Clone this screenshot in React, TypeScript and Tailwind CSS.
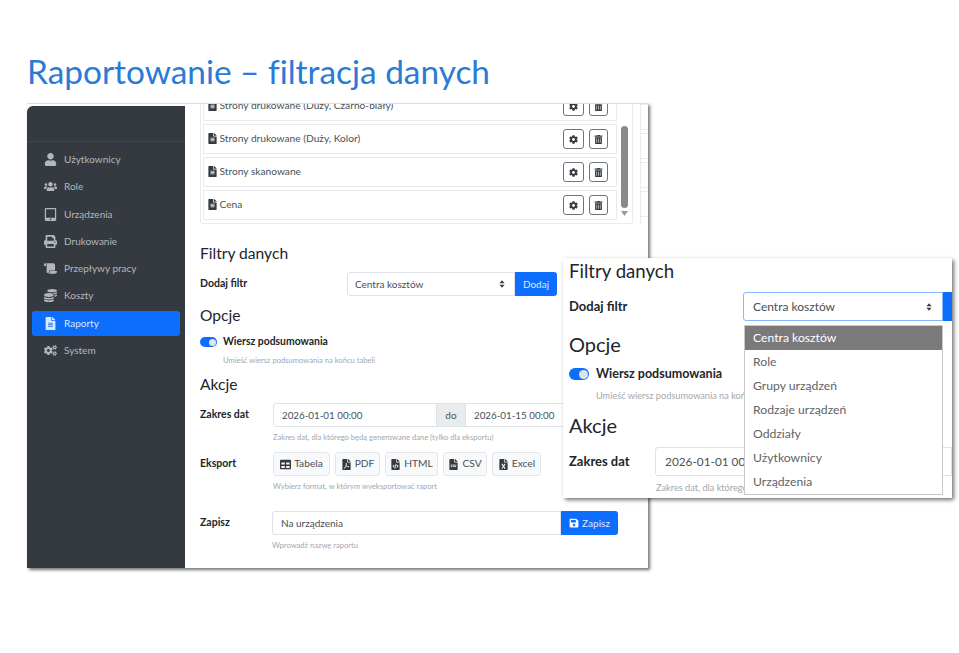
import type { ReactNode } from 'react';
import {
  FaUser, FaUsers, FaTabletAlt, FaPrint, FaScroll, FaCoins, FaFileAlt, FaCogs, FaCog, FaTrashAlt,
  FaTable, FaFilePdf, FaFileCode, FaFileCsv, FaFileExcel, FaSave,
} from 'react-icons/fa';

const NAV = [
  { label: 'Użytkownicy', icon: FaUser },
  { label: 'Role', icon: FaUsers },
  { label: 'Urządzenia', icon: FaTabletAlt },
  { label: 'Drukowanie', icon: FaPrint },
  { label: 'Przepływy pracy', icon: FaScroll },
  { label: 'Koszty', icon: FaCoins },
  { label: 'Raporty', icon: FaFileAlt, active: true },
  { label: 'System', icon: FaCogs },
];

const ROWS = ['Strony drukowane (Duży, Czarno-biały)', 'Strony drukowane (Duży, Kolor)', 'Strony skanowane', 'Cena'];

const EXPORTS = [
  { label: 'Tabela', icon: FaTable, w: 'w-[57px]' },
  { label: 'PDF', icon: FaFilePdf, w: 'w-[45px]' },
  { label: 'HTML', icon: FaFileCode, w: 'w-[53px]' },
  { label: 'CSV', icon: FaFileCsv, w: 'w-[44px]' },
  { label: 'Excel', icon: FaFileExcel, w: 'w-[49px]' },
];

const OPTIONS = ['Centra kosztów', 'Role', 'Grupy urządzeń', 'Rodzaje urządzeń', 'Oddziały', 'Użytkownicy', 'Urządzenia'];

function Chevrons() {
  return (
    <svg width="6" height="8" viewBox="0 0 7 9" className="shrink-0 fill-[#343a40]">
      <path d="M3.5 0 6.5 3.5H.5z" />
      <path d="M3.5 9 .5 5.5h6z" />
    </svg>
  );
}

function Toggle({ big }: { big?: boolean }) {
  return (
    <span className={`flex items-center justify-end rounded-full bg-[#0d6efd] p-[1.5px] ${big ? 'w-[20px] h-[12px]' : 'w-[17px] h-[10px]'}`}>
      <span className={`rounded-full bg-[#dfe3ea] ${big ? 'w-[9px] h-[9px]' : 'w-[7px] h-[7px]'}`} />
    </span>
  );
}

function Hint({ children, className = '' }: { children: ReactNode; className?: string }) {
  return <p className={`text-[7.6px] leading-[10px] text-[#a3a8ad] whitespace-nowrap ${className}`}>{children}</p>;
}

function Sidebar() {
  return (
    <aside className="mt-[2px] w-[158px] shrink-0 bg-[#343a40] rounded-tl-[6px]">
      <div className="h-[36px] border-b border-[#40464d]" />
      <nav className="px-[5px] pt-[5px] flex flex-col gap-[2.3px]">
        {NAV.map(({ label, icon: Icon, active }) => (
          <div
            key={label}
            className={`h-[25px] flex items-center rounded-[3px] text-[10px] ${active ? 'bg-[#0d6efd] text-[#dbe8fd]' : 'text-[#b4b7ba]'}`}
          >
            <span className="w-[27px] ml-[5px] flex justify-center text-[13px]">
              <Icon />
            </span>
            <span>{label}</span>
          </div>
        ))}
      </nav>
    </aside>
  );
}

function MetricList() {
  return (
    <div className="flex h-[120px] gap-[7px]">
      <div className="w-[433px] shrink-0 flex border border-t-0 border-[#e9ecef] rounded-b-[3px] overflow-hidden">
        <div className="w-[416px] flex flex-col justify-end gap-[3px] pl-[2px] pb-[3px]">
          {ROWS.map((row) => (
            <div key={row} className="h-[30px] shrink-0 flex items-center justify-between border border-[#e9ecef] pl-[3px] pr-[8px] text-[10.2px] text-[#495057]">
              <span className="flex items-center gap-[1.5px] whitespace-nowrap">
                <FaFileAlt className="text-[11px] text-[#343a40]" />
                {row}
              </span>
              <span className="flex gap-[5px]">
                <span className="w-[21px] h-[20px] flex items-center justify-center rounded-[3px] border border-[#6c757d] text-[9px] text-[#343a40]">
                  <FaCog />
                </span>
                <span className="w-[19px] h-[20px] flex items-center justify-center rounded-[3px] border border-[#6c757d] text-[9px] text-[#343a40]">
                  <FaTrashAlt />
                </span>
              </span>
            </div>
          ))}
        </div>
        <div className="flex-1 flex flex-col items-center pt-[22px]">
          <div className="w-[7px] h-[82px] rounded-full bg-[#8a8a8a]" />
          <svg width="7" height="5" viewBox="0 0 7 5" className="mt-[3px] fill-[#9a9a9a]">
            <path d="M0 0h7L3.500 5z" />
          </svg>
        </div>
      </div>
      <div className="flex-1 flex flex-col gap-[3px] border-l border-[#e9ecef]">
        {[0, 1, 2, 3].map((i) => (
          <div key={i} className="h-[26px] border-y border-[#e9ecef]" />
        ))}
      </div>
    </div>
  );
}

function MainWindow() {
  return (
    <div className="absolute left-[27px] top-[103px] w-[621px] h-[465px] flex bg-white overflow-hidden shadow-[2px_2px_3px_rgba(0,0,0,0.55)] border-t border-[#dfdfdf]">
      <Sidebar />
      <main className="flex-1 min-w-0 pl-[15px] text-[#212529]">
        <MetricList />
        <h2 className="mt-[19px] text-[15.6px] leading-[20px]">Filtry danych</h2>
        <div className="mt-[9px] flex items-center">
          <span className="w-[147px] text-[10.5px] font-bold">Dodaj filtr</span>
          <div className="w-[168px] h-[24px] flex items-center justify-between pl-[7px] pr-[9px] border border-[#dee2e6] rounded-l-[3px] text-[10px] text-[#495057]">
            Centra kosztów
            <Chevrons />
          </div>
          <span className="w-[42px] h-[24px] flex items-center justify-center bg-[#0d6efd] rounded-r-[3px] text-[10px] text-[#dbe8fd]">Dodaj</span>
        </div>
        <h2 className="mt-[9px] text-[15.6px] leading-[20px]">Opcje</h2>
        <div className="mt-[11px] flex items-center gap-[6px] h-[12px]">
          <Toggle />
          <span className="text-[10.4px] font-bold whitespace-nowrap">Wiersz podsumowania</span>
        </div>
        <Hint className="mt-[7px] ml-[23px]">Umieść wiersz podsumowania na końcu tabeli</Hint>
        <h2 className="mt-[9px] text-[15.6px] leading-[20px]">Akcje</h2>
        <div className="mt-[9px] flex items-center">
          <span className="w-[73px] text-[10.5px] font-bold">Zakres dat</span>
          <div className="w-[164px] h-[24px] flex items-center pl-[8px] border border-[#dee2e6] rounded-l-[3px] text-[9.8px] text-[#495057]">2026-01-01 00:00</div>
          <span className="w-[28px] h-[24px] flex items-center justify-center bg-[#e9ecef] border-y border-[#dee2e6] text-[10px] text-[#495057]">do</span>
          <div className="w-[100px] h-[24px] flex items-center pl-[8px] border border-[#dee2e6] text-[9.8px] text-[#495057] whitespace-nowrap">2026-01-15 00:00</div>
        </div>
        <Hint className="mt-[5px] ml-[73px]">Zakres dat, dla którego będą generowane dane (tylko dla eksportu)</Hint>
        <div className="mt-[10px] flex items-center">
          <span className="w-[73px] text-[10.5px] font-bold">Eksport</span>
          <div className="flex gap-[5px]">
            {EXPORTS.map(({ label, icon: Icon, w }) => (
              <span key={label} className={`h-[24px] flex items-center justify-center gap-[3px] bg-[#f8f9fa] border border-[#e3e6e9] rounded-[3px] text-[10.2px] text-[#495057] ${w}`}>
                <Icon className="text-[11px] text-[#343a40]" />
                {label}
              </span>
            ))}
          </div>
        </div>
        <Hint className="mt-[5px] ml-[73px]">Wybierz format, w którym wyeksportować raport</Hint>
        <div className="mt-[20px] flex items-center">
          <span className="w-[72px] text-[10.5px] font-bold">Zapisz</span>
          <div className="w-[289px] h-[24px] flex items-center pl-[8px] border border-[#dee2e6] rounded-l-[3px] text-[10px] text-[#495057]">Na urządzenia</div>
          <span className="w-[57px] h-[24px] flex items-center justify-center gap-[3px] bg-[#0d6efd] rounded-r-[3px] text-[10px] text-[#dbe8fd]">
            <FaSave className="text-[10px] text-white" />
            Zapisz
          </span>
        </div>
        <Hint className="mt-[5px] ml-[72px]">Wprowadź nazwę raportu</Hint>
      </main>
    </div>
  );
}

function ZoomWindow() {
  return (
    <div className="absolute left-[563px] top-[258px] w-[389px] h-[240px] bg-white overflow-hidden shadow-[2px_2px_4px_rgba(0,0,0,0.55)] pl-[6px] text-[#212529]">
      <h2 className="mt-[1px] text-[18.6px] leading-[24px]">Filtry danych</h2>
      <div className="mt-[9px] flex items-center">
        <span className="w-[174px] text-[13px] font-bold">Dodaj filtr</span>
        <div className="w-[200px] h-[29px] flex items-center justify-between pl-[9px] pr-[10px] border border-[#86b7fe] rounded-l-[3px] text-[12px] text-[#495057]">
          Centra kosztów
          <Chevrons />
        </div>
        <span className="w-[9px] h-[29px] bg-[#0d6efd]" />
      </div>
      <h2 className="mt-[10px] text-[20px] leading-[26px]">Opcje</h2>
      <div className="mt-[10px] flex items-center gap-[7px] h-[14px]">
        <Toggle big />
        <span className="text-[12.5px] font-bold whitespace-nowrap">Wiersz podsumowania</span>
      </div>
      <p className="mt-[9px] ml-[27px] text-[9.2px] leading-[12px] text-[#a3a8ad] whitespace-nowrap">Umieść wiersz podsumowania na końcu tabeli</p>
      <h2 className="mt-[10px] text-[20px] leading-[26px]">Akcje</h2>
      <div className="mt-[9px] flex items-center">
        <span className="w-[87px] text-[13px] font-bold">Zakres dat</span>
        <div className="w-[300px] h-[29px] flex items-center pl-[9px] border border-[#dee2e6] rounded-l-[3px] text-[11.8px] text-[#495057] whitespace-nowrap">2026-01-01 00:00</div>
      </div>
      <p className="mt-[6px] ml-[87px] text-[9.2px] leading-[12px] text-[#a3a8ad] whitespace-nowrap">Zakres dat, dla którego będą generowane dane</p>

      <div className="absolute left-[181px] top-[67px] w-[199px] bg-white border border-[#c9c9c9]">
        {OPTIONS.map((option, i) => (
          <div key={option} className={`h-[24px] flex items-center pl-[8px] text-[12.2px] ${i === 0 ? 'bg-[#7a7a7a] text-white' : 'text-[#5f6368]'}`}>
            {option}
          </div>
        ))}
      </div>
    </div>
  );
}

export default function App() {
  return (
    <div className="relative w-[959px] h-[653px] bg-white overflow-hidden font-['Lato','Noto_Sans',sans-serif]">
      <h1 className="absolute left-[27px] top-[50px] text-[33.4px] leading-[42px] text-[#2a7bd6] [font-variant-ligatures:none] whitespace-nowrap">
        Raportowanie – filtracja danych
      </h1>
      <MainWindow />
      <ZoomWindow />
    </div>
  );
}
